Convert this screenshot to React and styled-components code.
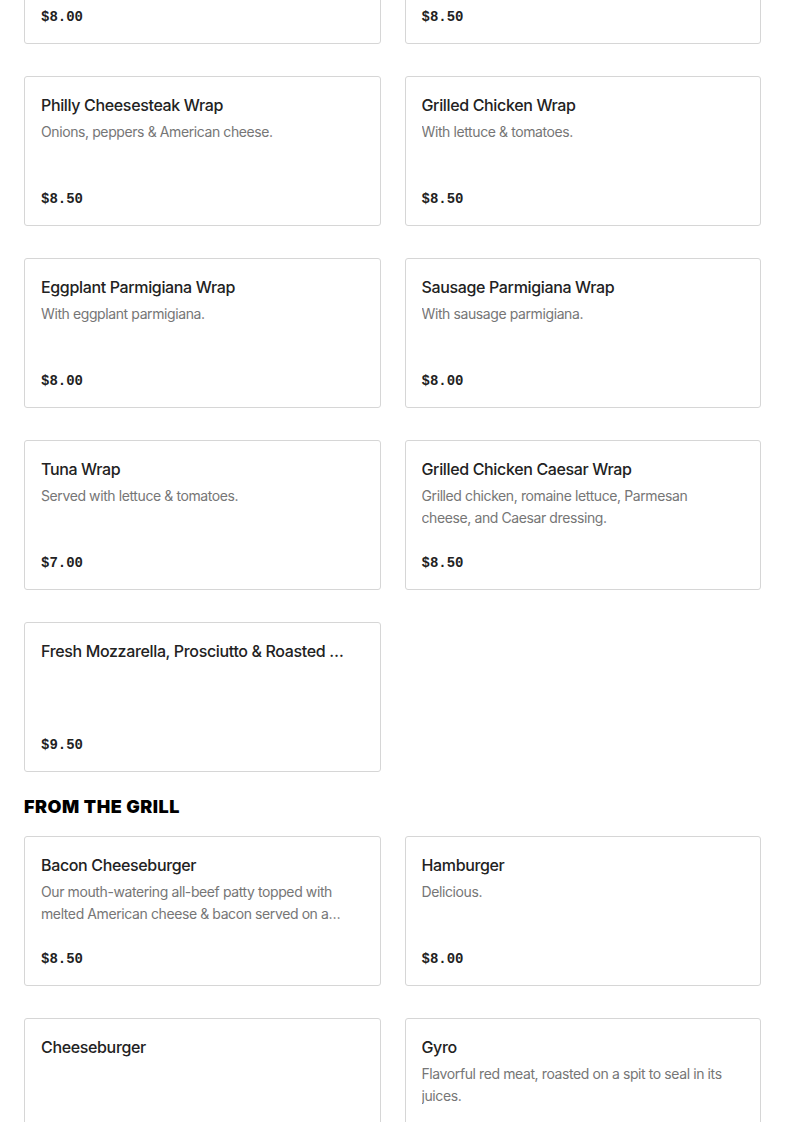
import React from 'react';
import styled, { createGlobalStyle } from 'styled-components';

const GlobalStyle = createGlobalStyle`
  * { box-sizing: border-box; }
  body {
    margin: 0;
    background: #fff;
    font-family: Inter, "Noto Sans", sans-serif;
    overflow: hidden;
  }
`;

const wraps = [
  { name: 'Chicken Parmigiana Wrap', desc: 'With chicken parmigiana.', price: '$8.00' },
  { name: 'Buffalo Chicken Wrap', desc: 'With lettuce & tomatoes.', price: '$8.50' },
  { name: 'Philly Cheesesteak Wrap', desc: 'Onions, peppers & American cheese.', price: '$8.50' },
  { name: 'Grilled Chicken Wrap', desc: 'With lettuce & tomatoes.', price: '$8.50' },
  { name: 'Eggplant Parmigiana Wrap', desc: 'With eggplant parmigiana.', price: '$8.00' },
  { name: 'Sausage Parmigiana Wrap', desc: 'With sausage parmigiana.', price: '$8.00' },
  { name: 'Tuna Wrap', desc: 'Served with lettuce & tomatoes.', price: '$7.00' },
  {
    name: 'Grilled Chicken Caesar Wrap',
    desc: 'Grilled chicken, romaine lettuce, Parmesan cheese, and Caesar dressing.',
    price: '$8.50',
  },
  { name: 'Fresh Mozzarella, Prosciutto & Roasted Peppers Wrap', desc: '', price: '$9.50' },
];

const grill = [
  {
    name: 'Bacon Cheeseburger',
    desc: 'Our mouth-watering all-beef patty topped with melted American cheese & bacon served on a toasted bun.',
    price: '$8.50',
  },
  { name: 'Hamburger', desc: 'Delicious.', price: '$8.00' },
  { name: 'Cheeseburger', desc: '', price: '$8.00' },
  { name: 'Gyro', desc: 'Flavorful red meat, roasted on a spit to seal in its juices.', price: '$9.00' },
];

const MenuItem = ({ item }) => (
  <Card>
    <Title>{item.name}</Title>
    {item.desc && <Desc>{item.desc}</Desc>}
    <Price>{item.price}</Price>
  </Card>
);

const App = () => {
  return (
    <>
      <GlobalStyle />
      <Page>
        <Grid>
          {wraps.map((el, index) => (
            <MenuItem key={index} item={el} />
          ))}
        </Grid>
        <Section>
          <Heading>FROM THE GRILL</Heading>
          <Grid>
            {grill.map((el, index) => (
              <MenuItem key={index} item={el} />
            ))}
          </Grid>
        </Section>
      </Page>
    </>
  );
};

// the list is shown scrolled: the first row sits partly above the frame
const Page = styled.div`
  margin-top: -106px;
  padding: 0 24px 40px;
`;

const Grid = styled.div`
  display: grid;
  grid-template-columns: repeat(2, 1fr);
  column-gap: 24px;
  row-gap: 32px;
`;

const Section = styled.section`
  margin-top: 23px;
`;

const Heading = styled.h2`
  margin: 0 0 17px;
  font-family: Inter, sans-serif;
  font-weight: 900;
  font-size: 18px;
  line-height: 24px;
  letter-spacing: 0.5px;
  color: #000;
`;

const Card = styled.div`
  height: 150px;
  border: 1px solid #d6d6d6;
  border-radius: 3px;
  padding: 16px;
  display: flex;
  flex-direction: column;
  min-width: 0;
`;

const Title = styled.div`
  padding-right: 18px;
  font-size: 16px;
  font-weight: 500;
  line-height: 24px;
  letter-spacing: -0.35px;
  color: #222;
  white-space: nowrap;
  overflow: hidden;
  text-overflow: ellipsis;
`;

const Desc = styled.div`
  margin-top: 4px;
  padding-right: 16px;
  font-size: 14px;
  line-height: 22px;
  letter-spacing: -0.4px;
  color: #767676;
  display: -webkit-box;
  -webkit-line-clamp: 2;
  -webkit-box-orient: vertical;
  overflow: hidden;
`;

const Price = styled.div`
  margin-top: auto;
  font-family: "Liberation Mono", "DejaVu Sans Mono", monospace;
  font-weight: 700;
  font-size: 14px;
  line-height: 20px;
  color: #222;
`;

export default App;
